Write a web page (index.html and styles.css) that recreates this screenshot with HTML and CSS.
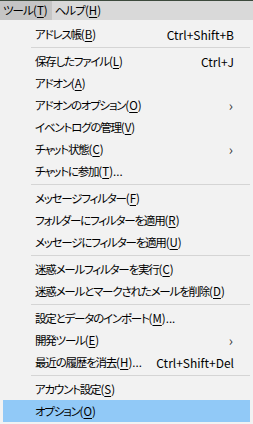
FILE: index.html
```html
<!DOCTYPE html>
<html lang="ja">
<head>
    <meta charset="UTF-8">
    <title>ツール</title>
    <link rel="stylesheet" href="styles.css">
</head>
<body>
    <div class="menubar">
        <div class="bar-item active">ツール<span class="acc">(<u>T</u>)</span></div>
        <div class="bar-item">ヘルプ<span class="acc">(<u>H</u>)</span></div>
    </div>
    <div class="menu">
        <div class="item"><span class="label">アドレス帳<span class="acc">(<u>B</u>)</span></span><span class="key">Ctrl+Shift+B</span></div>
        <div class="sep"></div>
        <div class="item"><span class="label">保存したファイル<span class="acc">(<u>L</u>)</span></span><span class="key">Ctrl+J</span></div>
        <div class="item"><span class="label">アドオン<span class="acc">(<u>A</u>)</span></span></div>
        <div class="item sub"><span class="label">アドオンのオプション<span class="acc">(<u>O</u>)</span></span><span class="arrow">›</span></div>
        <div class="item"><span class="label">イベントログの管理<span class="acc">(<u>V</u>)</span></span></div>
        <div class="item sub"><span class="label">チャット状態<span class="acc">(<u>C</u>)</span></span><span class="arrow">›</span></div>
        <div class="item"><span class="label">チャットに参加<span class="acc">(<u>T</u>)...</span></span></div>
        <div class="sep"></div>
        <div class="item"><span class="label">メッセージフィルター<span class="acc">(<u>F</u>)</span></span></div>
        <div class="item"><span class="label">フォルダーにフィルターを適用<span class="acc">(<u>R</u>)</span></span></div>
        <div class="item"><span class="label">メッセージにフィルターを適用<span class="acc">(<u>U</u>)</span></span></div>
        <div class="sep"></div>
        <div class="item"><span class="label">迷惑メールフィルターを実行<span class="acc">(<u>C</u>)</span></span></div>
        <div class="item"><span class="label">迷惑メールとマークされたメールを削除<span class="acc">(<u>D</u>)</span></span></div>
        <div class="sep"></div>
        <div class="item"><span class="label">設定とデータのインポート<span class="acc">(<u>M</u>)...</span></span></div>
        <div class="item sub"><span class="label">開発ツール<span class="acc">(<u>E</u>)</span></span><span class="arrow">›</span></div>
        <div class="item"><span class="label">最近の履歴を消去<span class="acc">(<u>H</u>)...</span></span><span class="key">Ctrl+Shift+Del</span></div>
        <div class="sep"></div>
        <div class="item"><span class="label">アカウント設定<span class="acc">(<u>S</u>)</span></span></div>
        <div class="item hover"><span class="label">オプション<span class="acc">(<u>O</u>)</span></span></div>
    </div>
</body>
</html>
```

FILE: styles.css
```css
body {
    margin: 0;
    padding: 0;
    width: 253px;
    height: 424px;
    overflow: hidden;
    background: #f2f2f2;
    font-family: "Noto Sans CJK JP", "Noto Sans", sans-serif;
    font-size: 12px;
    color: #000;
}
u {
    text-decoration-thickness: 1px;
    text-underline-offset: 2px;
}
.acc {
    letter-spacing: 0;
    font-size: 11.5px;
}
.menubar {
    display: flex;
    height: 19px;
    background: #d9d9d9;
    border-top: 1px solid #3d4a3d;
}
.bar-item {
    display: flex;
    align-items: center;
    padding: 0 4px 0 3px;
    line-height: 19px;
    font-size: 11.5px;
    letter-spacing: -0.9px;
    font-feature-settings: "palt";
}
.bar-item.active {
    background: #c5c5c5;
}
.menu {
    display: flex;
    flex-direction: column;
    padding: 3px 3px 2px 3px;
    background: #f2f2f2;
}
.item {
    display: flex;
    align-items: center;
    height: 22px;
    padding-left: 32px;
    padding-right: 16px;
    white-space: nowrap;
}
.item .label {
    flex: 1;
    font-size: 11.5px;
    letter-spacing: -1.2px;
    font-feature-settings: "palt";
}
.item .key {
    margin-left: 10px;
}
.item .arrow {
    font-size: 14px;
    color: #333;
    margin-right: 1px;
}
.item.hover {
    background: #91c9f7;
}
.sep {
    height: 1px;
    margin: 2px 0 2px 28px;
    background: #d5d5d5;
}
```
